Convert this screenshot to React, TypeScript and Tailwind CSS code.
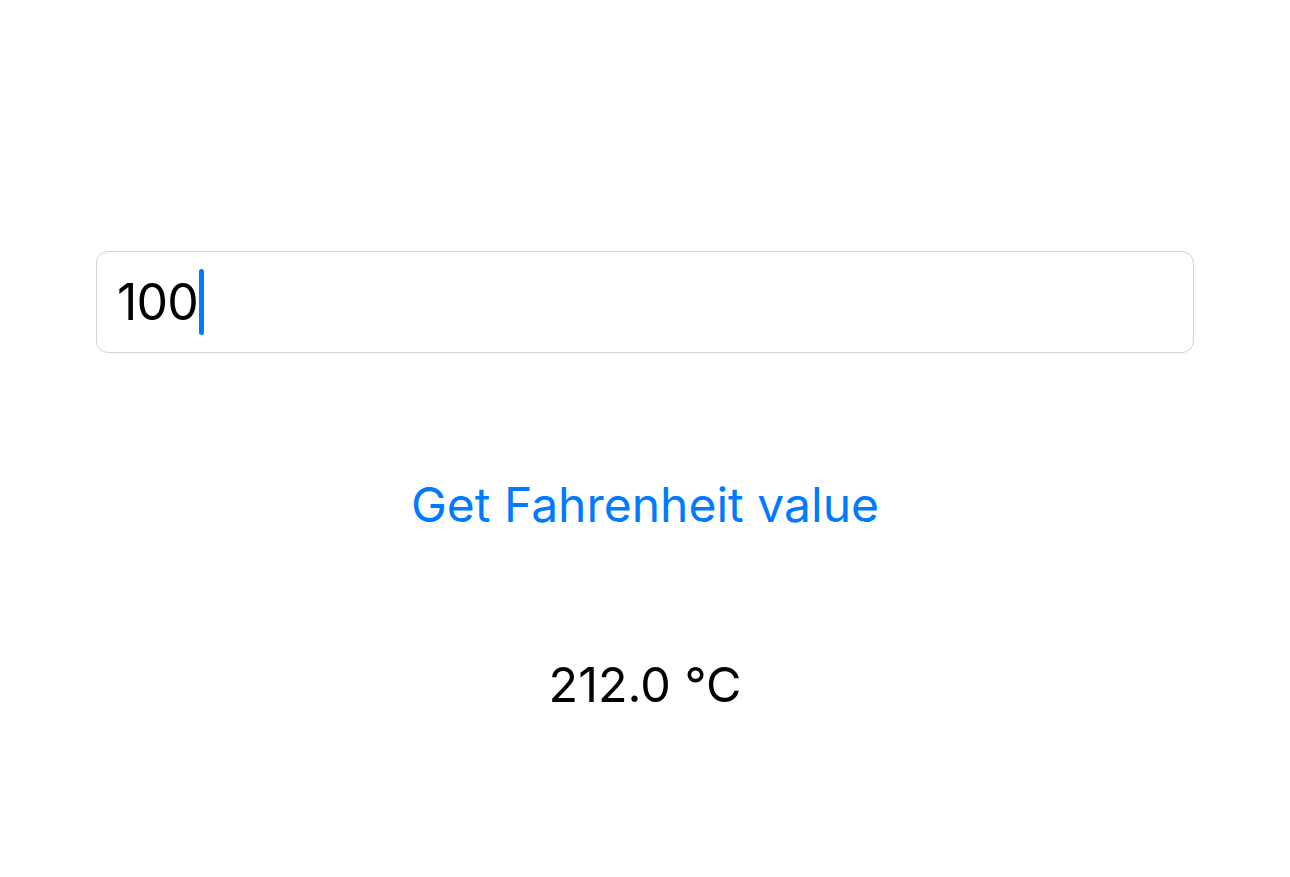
import React from "react";

export default function App() {
  return (
    <div className="flex h-[877px] w-[1290px] flex-col items-center bg-white font-['Inter',sans-serif] text-black">
      <div className="mt-[251px] flex h-[102px] w-[1098px] items-center rounded-[12px] border border-[#d1d1d6] px-[20px]">
        <span className="text-[50px] leading-none tracking-[-0.8px]">100</span>
        <span className="ml-[1px] h-[66px] w-[5px] rounded-full bg-[#007aff]" />
      </div>
      <button className="mt-[122px] text-[48px] leading-[60px] text-[#007aff]">
        Get Fahrenheit value
      </button>
      <div className="mt-[120px] text-[48.5px] leading-[60px]">212.0 °C</div>
    </div>
  );
}
